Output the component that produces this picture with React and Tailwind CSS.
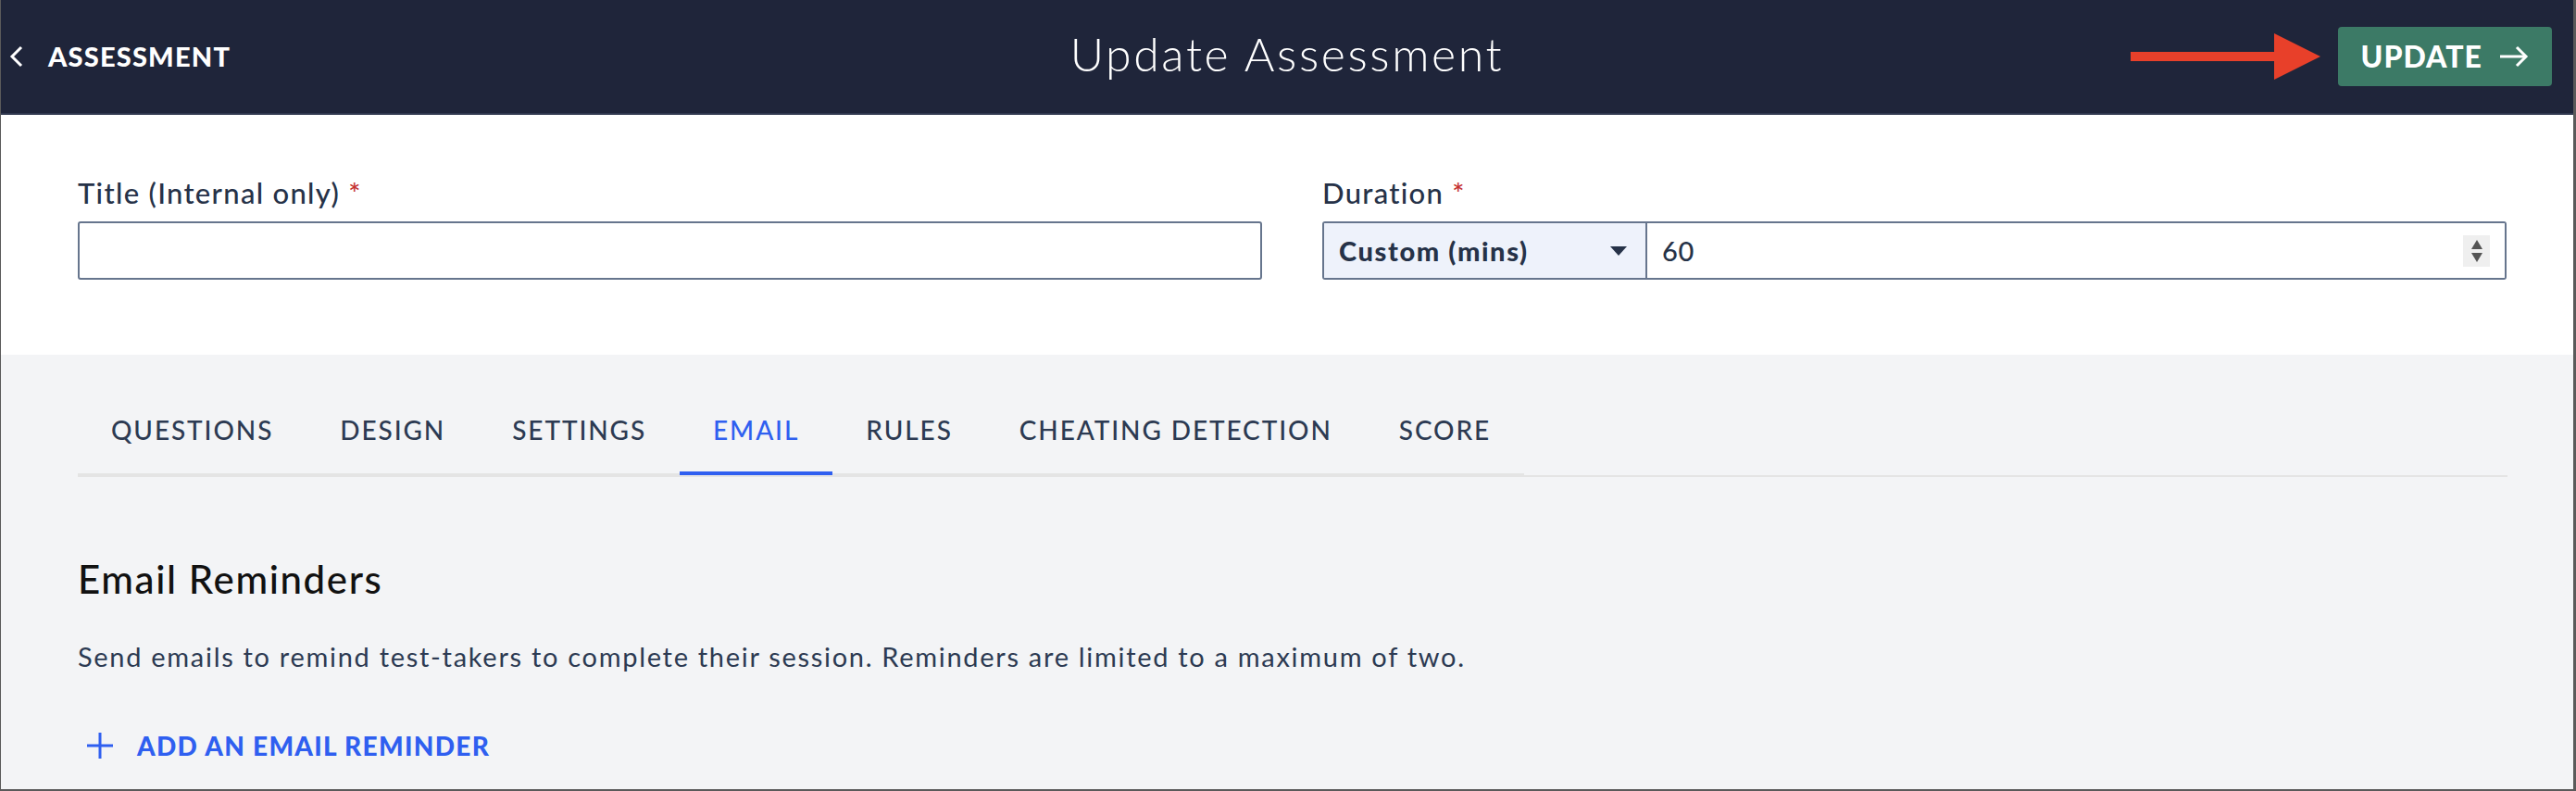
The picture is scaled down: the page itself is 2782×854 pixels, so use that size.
import React from "react";

const tabs = ["QUESTIONS", "DESIGN", "SETTINGS", "EMAIL", "RULES", "CHEATING DETECTION", "SCORE"];

const Header = () => {
  return (
    <header className="grid h-[124px] grid-cols-[1fr_auto_1fr] items-center border-b-2 border-[#30384f] bg-[#1f253a] text-white">
      <div className="flex items-center gap-[26px] pl-[9px]">
        <svg width="16" height="24" viewBox="0 0 16 24" fill="none">
          <polyline points="13,2 3,12 13,22" stroke="white" strokeWidth="3" />
        </svg>
        <span className="text-[29px] font-black tracking-[1.2px]">ASSESSMENT</span>
      </div>
      <h1 className="pb-[6px] text-[50px] font-light tracking-[2.6px]">Update Assessment</h1>
      <div className="flex items-center justify-end gap-[19px] pr-[23px]">
        {/* red pointer */}
        <svg width="205" height="50" viewBox="0 0 205 50">
          <rect x="0" y="20" width="160" height="10" fill="#e8402a" />
          <polygon points="155,0 205,25 155,50" fill="#e8402a" />
        </svg>
        <button className="flex h-[64px] items-center gap-[18px] rounded-[4px] bg-[#3c7a66] px-[25px] text-[32px] font-black tracking-[1px]">
          UPDATE
          <svg width="32" height="24" viewBox="0 0 32 24" fill="none">
            <line x1="1" y1="12" x2="29" y2="12" stroke="white" strokeWidth="3" />
            <polyline points="19,2 29,12 19,22" stroke="white" strokeWidth="3" />
          </svg>
        </button>
      </div>
    </header>
  );
};

const Field = ({ label, children }) => (
  <div className="flex flex-col gap-[8px]">
    <label className="text-[31px] font-medium leading-[45px] tracking-[1.3px] text-[#263248]">
      {label} <span className="text-[#c53030]">*</span>
    </label>
    {children}
  </div>
);

const App = () => {
  return (
    <div
      className="flex h-[854px] w-full flex-col border-b-2 border-l border-r-[3px] border-[#5a5a5a]"
      style={{ fontFamily: "Lato, 'Open Sans', sans-serif" }}
    >
      <Header />

      {/* form */}
      <section className="grid grid-cols-2 gap-[65px] bg-white pb-[81px] pl-[83px] pr-[72px] pt-[62px]">
        <Field label="Title (Internal only)">
          <input className="h-[63px] rounded-[3px] border-2 border-[#66758d] bg-white px-4 text-[28px] outline-none" />
        </Field>
        <Field label="Duration">
          <div className="flex h-[63px] overflow-hidden rounded-[3px] border-2 border-[#66758d]">
            <div className="flex w-[349px] items-center justify-between border-r-2 border-[#66758d] bg-[#eef2fb] pl-[16px] pr-[20px]">
              <span className="text-[29px] font-black tracking-[1.6px] text-[#263248]">Custom (mins)</span>
              <svg width="18" height="10" viewBox="0 0 18 10">
                <polygon points="0,0 18,0 9,10" fill="#263248" />
              </svg>
            </div>
            <div className="flex flex-1 items-center justify-between bg-white pl-[16px] pr-[16px]">
              <span className="text-[29px] font-medium tracking-[0.8px] text-[#263248]">60</span>
              <div className="flex h-[34px] w-[29px] flex-col items-center justify-center gap-[4px] bg-[#efefef]">
                <svg width="12" height="10" viewBox="0 0 12 10">
                  <polygon points="6,0 12,10 0,10" fill="#555" />
                </svg>
                <svg width="12" height="10" viewBox="0 0 12 10">
                  <polygon points="0,0 12,0 6,10" fill="#555" />
                </svg>
              </div>
            </div>
          </div>
        </Field>
      </section>

      {/* tabs + email */}
      <section className="flex-1 bg-[#f3f4f6] pl-[83px] pr-[71px] pt-[30px]">
        <div className="border-b-2 border-[#e4e4e4]">
          <div className="flex">
            {tabs.map((t) =>
              t === "EMAIL" ? (
                <div
                  key={t}
                  className="border-b-4 border-[#2f5ff0] px-[36px] pb-[24px] pt-[30px] text-[28px] font-medium leading-[42px] tracking-[1.9px] text-[#2f5ff0]"
                >
                  {t}
                </div>
              ) : (
                <div
                  key={t}
                  className="border-b-2 border-[#e4e4e4] px-[36px] pb-[26px] pt-[30px] text-[28px] font-medium leading-[42px] tracking-[1.9px] text-[#2c3a52]"
                >
                  {t}
                </div>
              )
            )}
          </div>
        </div>

        <h2 className="mt-[87px] text-[42px] font-medium leading-[47px] tracking-[1.6px] text-[#111]">Email Reminders</h2>
        <p className="mt-[40px] text-[29px] leading-[40px] tracking-[1.7px] text-[#2c3a52]">
          Send emails to remind test-takers to complete their session. Reminders are limited to a maximum of two.
        </p>
        <button className="mt-[55px] flex items-center gap-[26px] pl-[10px] text-[28px] font-black leading-[42px] tracking-[1.3px] text-[#2f5ff0]">
          <svg width="28" height="28" viewBox="0 0 28 28">
            <line x1="14" y1="0" x2="14" y2="28" stroke="#2f5ff0" strokeWidth="3" />
            <line x1="0" y1="14" x2="28" y2="14" stroke="#2f5ff0" strokeWidth="3" />
          </svg>
          ADD AN EMAIL REMINDER
        </button>
      </section>
    </div>
  );
};

export default App;
